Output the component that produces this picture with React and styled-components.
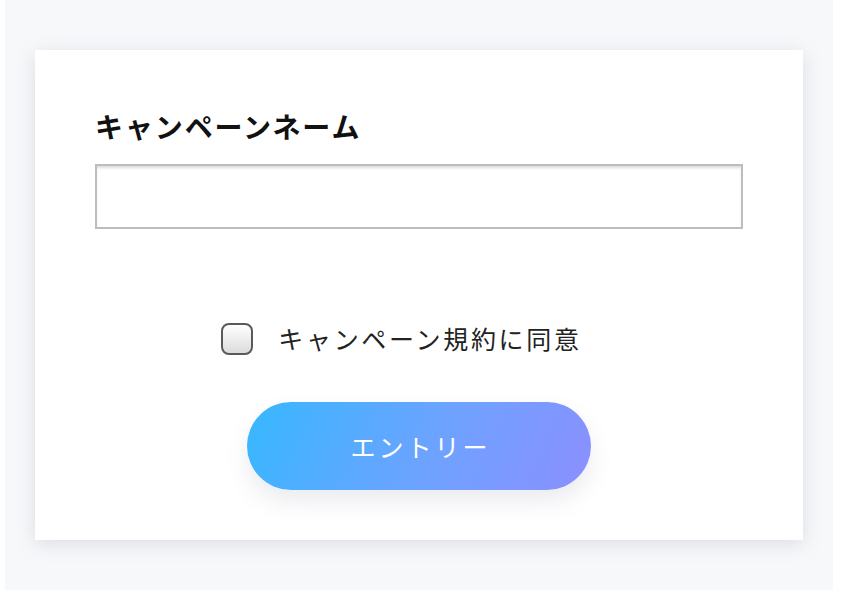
import React from "react";
import styled, { createGlobalStyle } from "styled-components";

const GlobalStyle = createGlobalStyle`
  html, body {
    margin: 0;
    padding: 0;
    background: #ffffff;
    font-family: "Noto Sans CJK JP", "Noto Sans", sans-serif;
  }
`;

const Page = styled.div`
  margin: 0 8px 0 5px;
  padding: 50px 30px;
  background: #f7f8fa;
  min-height: 490px;
`;

const Card = styled.form`
  background: #ffffff;
  padding: 60px 60px 50px;
  box-shadow: 0 4px 18px rgba(120, 130, 150, 0.22);
  display: flex;
  flex-direction: column;
`;

const Label = styled.label`
  font-size: 28px;
  font-weight: 700;
  line-height: 1.2;
  letter-spacing: 1.9px;
  color: #111111;
  margin-bottom: 20px;
`;

const TextInput = styled.input`
  box-sizing: border-box;
  width: 100%;
  height: 65px;
  border: 2px solid #bdbdbd;
  box-shadow: inset 0 3px 3px -1px rgba(0, 0, 0, 0.14);
  background: #ffffff;
  font-size: 22px;
  padding: 0 14px;
  outline: none;
`;

const AgreeRow = styled.div`
  margin-top: 94px;
  display: flex;
  align-items: center;
  justify-content: center;
  gap: 25px;
  padding-right: 35px;
  height: 32px;
`;

const Check = styled.input`
  appearance: none;
  margin: 0;
  box-sizing: border-box;
  width: 32px;
  height: 32px;
  border: 2px solid #5a5a5a;
  border-radius: 8px;
  background: linear-gradient(#ffffff, #dcdcdc);
`;

const AgreeText = styled.label`
  font-size: 25px;
  letter-spacing: 2.7px;
  line-height: 1;
  color: #222222;
`;

const EntryButton = styled.button`
  align-self: center;
  margin-top: 47px;
  width: 344px;
  height: 88px;
  border: none;
  border-radius: 44px;
  background: linear-gradient(115deg, #36b8ff 0%, #6ea2ff 55%, #8b8fff 100%);
  box-shadow: 0 12px 22px rgba(110, 120, 140, 0.14);
  color: #ffffff;
  font-family: "Noto Sans CJK JP", "Noto Sans", sans-serif;
  font-size: 25px;
  letter-spacing: 3px;
  padding: 0 0 0 3px;
  cursor: pointer;
`;

export default function App() {
  return (
    <>
      <GlobalStyle />
      <Page>
        <Card onSubmit={(e) => e.preventDefault()}>
          <Label htmlFor="campaign-name">キャンペーンネーム</Label>
          <TextInput id="campaign-name" type="text" />
          <AgreeRow>
            <Check type="checkbox" id="agree" />
            <AgreeText htmlFor="agree">キャンペーン規約に同意</AgreeText>
          </AgreeRow>
          <EntryButton type="submit">エントリー</EntryButton>
        </Card>
      </Page>
    </>
  );
}
